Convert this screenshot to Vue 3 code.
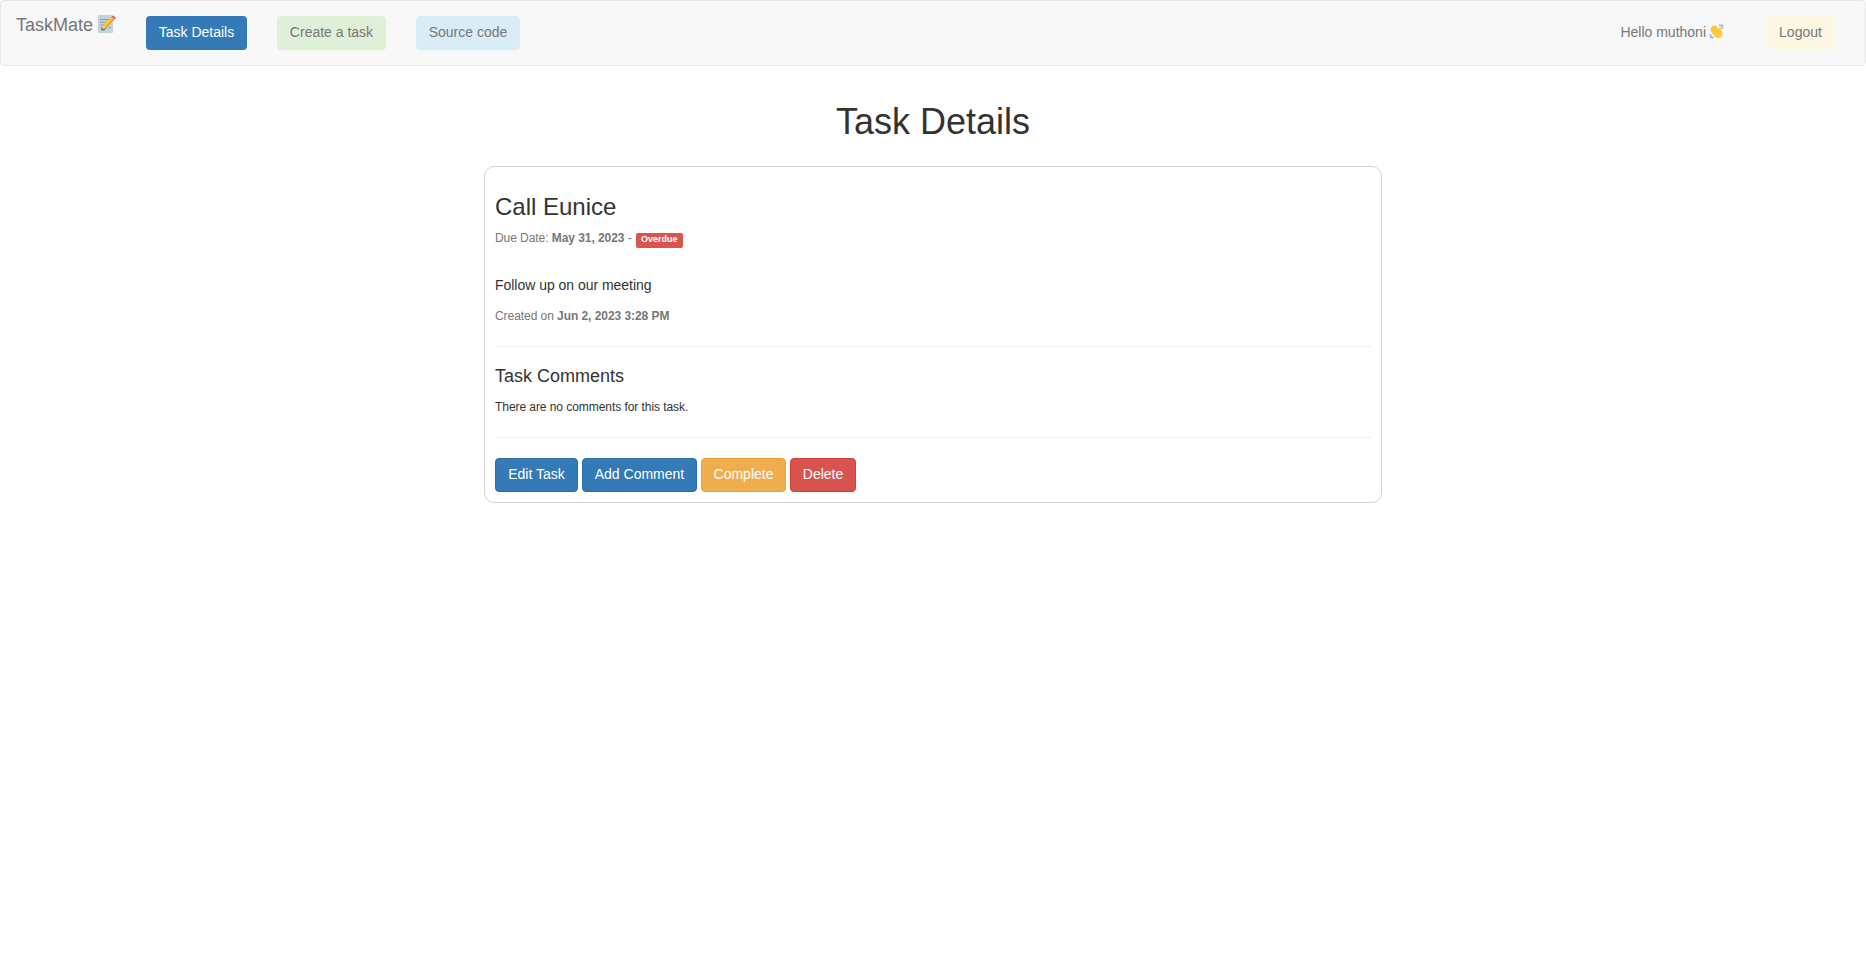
<script setup>
const actions = [
  { label: 'Edit Task', kind: 'primary edit' },
  { label: 'Add Comment', kind: 'primary comment' },
  { label: 'Complete', kind: 'warning' },
  { label: 'Delete', kind: 'danger' },
]
</script>

<template>
  <nav class="navbar">
    <a class="brand">
      <span>TaskMate</span>
      <svg class="memo" viewBox="0 0 18 18">
        <rect x="0" y="0" width="15" height="18" rx="1.2" fill="#c5d3da" />
        <path d="M2 4.5H12M2 7.2H10M2 9.9H8M2 12.6H5M10 12.6H13" stroke="#8b9ba4" stroke-width="1" />
        <path d="M3.4 14.9L5.2 10.5L7.8 13.2Z" fill="#e8c39b" />
        <path d="M3.2 15.2L4 13.1L5.2 14.3Z" fill="#333b40" />
        <path d="M3.6 14.8Q6.5 15.6 8 13.2" fill="none" stroke="#4c5357" stroke-width="1" />
        <path d="M5.1 10.4L12.7 2.7L15.6 5.6L7.9 13.2Z" fill="#ffca28" />
        <path d="M6.9 12.2L14.6 4.6L15.6 5.6L7.9 13.2Z" fill="#e99a18" />
        <path d="M12.7 2.7L14 1.4L16.9 4.3L15.6 5.6Z" fill="#a9bac3" />
        <path d="M13.7 1.7L14.3 1Q15.4 .2 16.7 1.4Q18.1 2.7 17.3 3.9L16.6 4.6Z" fill="#f2616d" />
      </svg>
    </a>
    <a class="pill current">Task Details</a>
    <a class="pill create">Create a task</a>
    <a class="pill source">Source code</a>
    <span class="hello">
      <span>Hello muthoni</span>
      <svg class="wave" viewBox="0 0 15 15">
        <path d="M9.6 .8L14.3 .5L14 5.1L12.6 4.6L12.6 2.2L10 2Z" fill="#82bcec" />
        <path d="M.6 9.8L2.2 10.2L2.6 12.2L4.6 13L4.4 14.4L1.4 14.3Z" fill="#82bcec" />
        <path d="M1.5 6.4Q1 5.1 2 4.5Q1.7 3 3 2.7Q3.6 1.2 4.9 1.7Q6.2 .7 7.3 2L9.8 5.3Q10.1 3.2 11.4 3.1Q12.8 3.3 12.6 5.3Q12.6 7 13.3 8.6Q14.2 12.2 11.4 13.7Q8 15.1 5.4 12.4Z" fill="#ffcc3c" />
        <path d="M2.5 5L5.4 8.6M3.8 3.3L6.9 7.2M5.5 2.2L8.2 5.8M9.8 5.5Q8.3 7.7 9.3 10" fill="none" stroke="#e9aa32" stroke-width=".6" />
      </svg>
    </span>
    <a class="pill logout">Logout</a>
  </nav>

  <main>
    <h1>Task Details</h1>
    <section class="card">
      <h3>Call Eunice</h3>
      <div class="meta due">
        <span>Due Date: <b>May 31, 2023</b> -</span>
        <span class="label">Overdue</span>
      </div>
      <p class="description">Follow up on our meeting</p>
      <div class="meta">Created on <b>Jun 2, 2023 3:28 PM</b></div>
      <hr />
      <h4>Task Comments</h4>
      <p class="empty">There are no comments for this task.</p>
      <hr />
      <div class="actions">
        <button v-for="a in actions" :key="a.label" :class="a.kind">{{ a.label }}</button>
      </div>
    </section>
  </main>
</template>

<style>
body {
  background: #fff;
}
</style>

<style scoped>
.navbar,
main {
  box-sizing: border-box;
  font-family: "Liberation Sans", Arial, sans-serif;
  font-size: 14px;
  line-height: 20px;
  color: #333;
}
.navbar {
  display: flex;
  align-items: flex-start;
  height: 66px;
  padding: 15px 30px 0 15px;
  border: 1px solid #e7e7e7;
  border-radius: 4px;
  background: #f8f8f8;
  color: #777;
}
.brand {
  display: flex;
  width: 130px;
  font-size: 18px;
  line-height: 18px;
}
.memo {
  width: 18px;
  height: 18px;
  margin: -1px 0 0 5px;
}
.pill {
  box-sizing: border-box;
  height: 34px;
  padding-top: 6px;
  border-radius: 4px;
  text-align: center;
}
.current {
  width: 101px;
  background: #337ab7;
  color: #fff;
}
.create {
  width: 109px;
  margin-left: 30px;
  background: #dff0d8;
}
.source {
  width: 104px;
  margin-left: 30px;
  background: #d9edf7;
}
.hello {
  display: flex;
  margin: 6px 42px 0 auto;
}
.wave {
  width: 15px;
  height: 15px;
  margin: 2px 0 0 3px;
}
.logout {
  width: 69px;
  background: #fcf8e3;
}
main {
  width: 898px;
  margin: 0 auto;
}
h1,
h3,
h4,
p {
  margin: 0;
  font-weight: 500;
}
h1 {
  padding-top: 36px;
  font-size: 36px;
  line-height: 40px;
  text-align: center;
}
.card {
  box-sizing: border-box;
  height: 337px;
  margin-top: 24px;
  padding: 27px 10px 10px;
  border: 1px solid #d3d3d3;
  border-radius: 10px;
}
h3 {
  font-size: 24px;
  line-height: 26px;
}
.meta {
  font-size: 12px;
  letter-spacing: -0.06px;
  color: #777;
}
.due {
  display: flex;
  margin-top: 8px;
}
.label {
  box-sizing: border-box;
  width: 47px;
  height: 15px;
  margin: 5px 0 0 4px;
  border-radius: 2px;
  background: #d9534f;
  color: #fff;
  font-size: 9px;
  font-weight: 700;
  letter-spacing: 0;
  line-height: 12px;
  text-align: center;
}
.description {
  margin: 27px 0 11px;
  letter-spacing: -0.03px;
}
hr {
  height: 0;
  margin: 20px 0 19px;
  border: 0;
  border-top: 1px solid #eee;
}
h4 {
  margin-bottom: 11px;
  font-size: 18px;
}
.empty {
  font-size: 12px;
  letter-spacing: -0.06px;
}
.actions {
  display: flex;
  gap: 4px;
  padding-top: 1px;
}
button {
  box-sizing: border-box;
  height: 34px;
  padding: 0 0 2px;
  border: 1px solid;
  border-radius: 4px;
  color: #fff;
  font: inherit;
}
.primary {
  border-color: #2e6da4;
  background: #337ab7;
}
.edit {
  width: 83px;
}
.comment {
  width: 115px;
}
.warning {
  width: 85px;
  border-color: #eea236;
  background: #f0ad4e;
}
.danger {
  width: 66px;
  border-color: #d43f3a;
  background: #d9534f;
}
</style>
